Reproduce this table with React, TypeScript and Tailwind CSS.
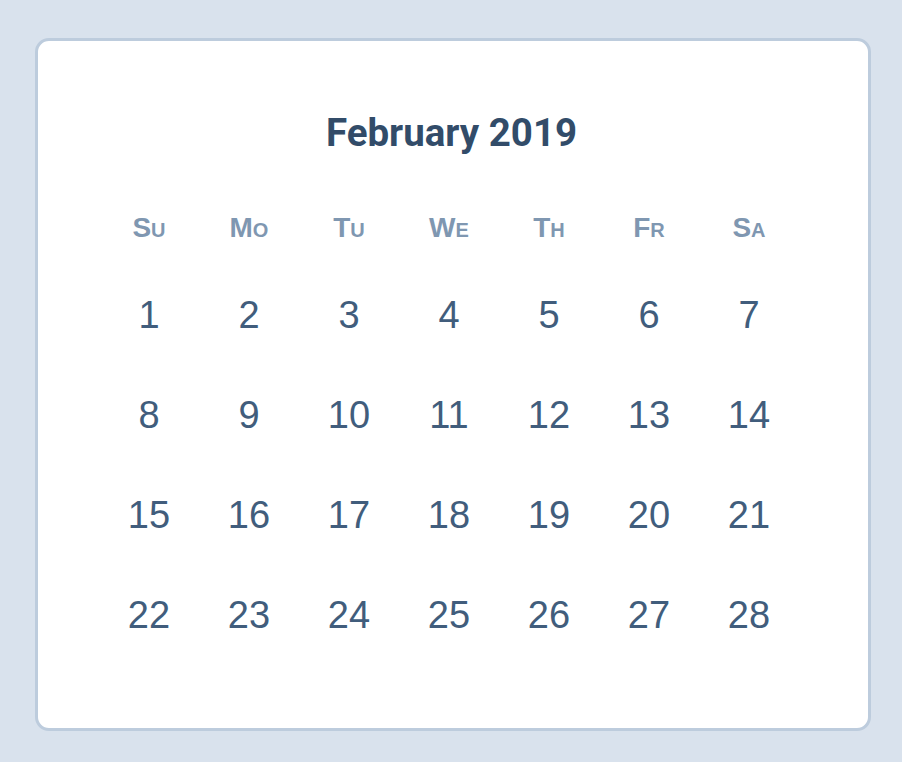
const days = ["Su", "Mo", "Tu", "We", "Th", "Fr", "Sa"];
const dates = Array.from({ length: 28 }, (_, i) => i + 1);

export default function App() {
  return (
    <div className="min-h-screen w-full bg-[#d9e2ed] pt-[38px] pl-[35px]">
      <div className="w-[836px] h-[693px] bg-white border-[3px] border-[#bdccdd] rounded-[14px] pt-[70px] pl-[61px]">
        <h1 className="w-[705px] text-center text-[38.5px] leading-[44px] font-bold text-[#324c69] font-['Roboto',sans-serif]">
          February 2019
        </h1>
        <div className="grid grid-cols-[repeat(7,100px)] mt-[57px] font-['Liberation_Sans',Arial,sans-serif]">
          {days.map((d) => (
            <div
              key={d}
              className="text-center text-[28px] leading-[32px] font-bold [font-variant:small-caps] text-[#7f97b1]"
            >
              {d}
            </div>
          ))}
        </div>
        <div className="grid grid-cols-[repeat(7,100px)] mt-[21px] font-['Liberation_Sans',Arial,sans-serif]">
          {dates.map((n) => (
            <div key={n} className="h-[100px] text-center text-[38px] leading-[100px] text-[#415d7c]">
              {n}
            </div>
          ))}
        </div>
      </div>
    </div>
  );
}
